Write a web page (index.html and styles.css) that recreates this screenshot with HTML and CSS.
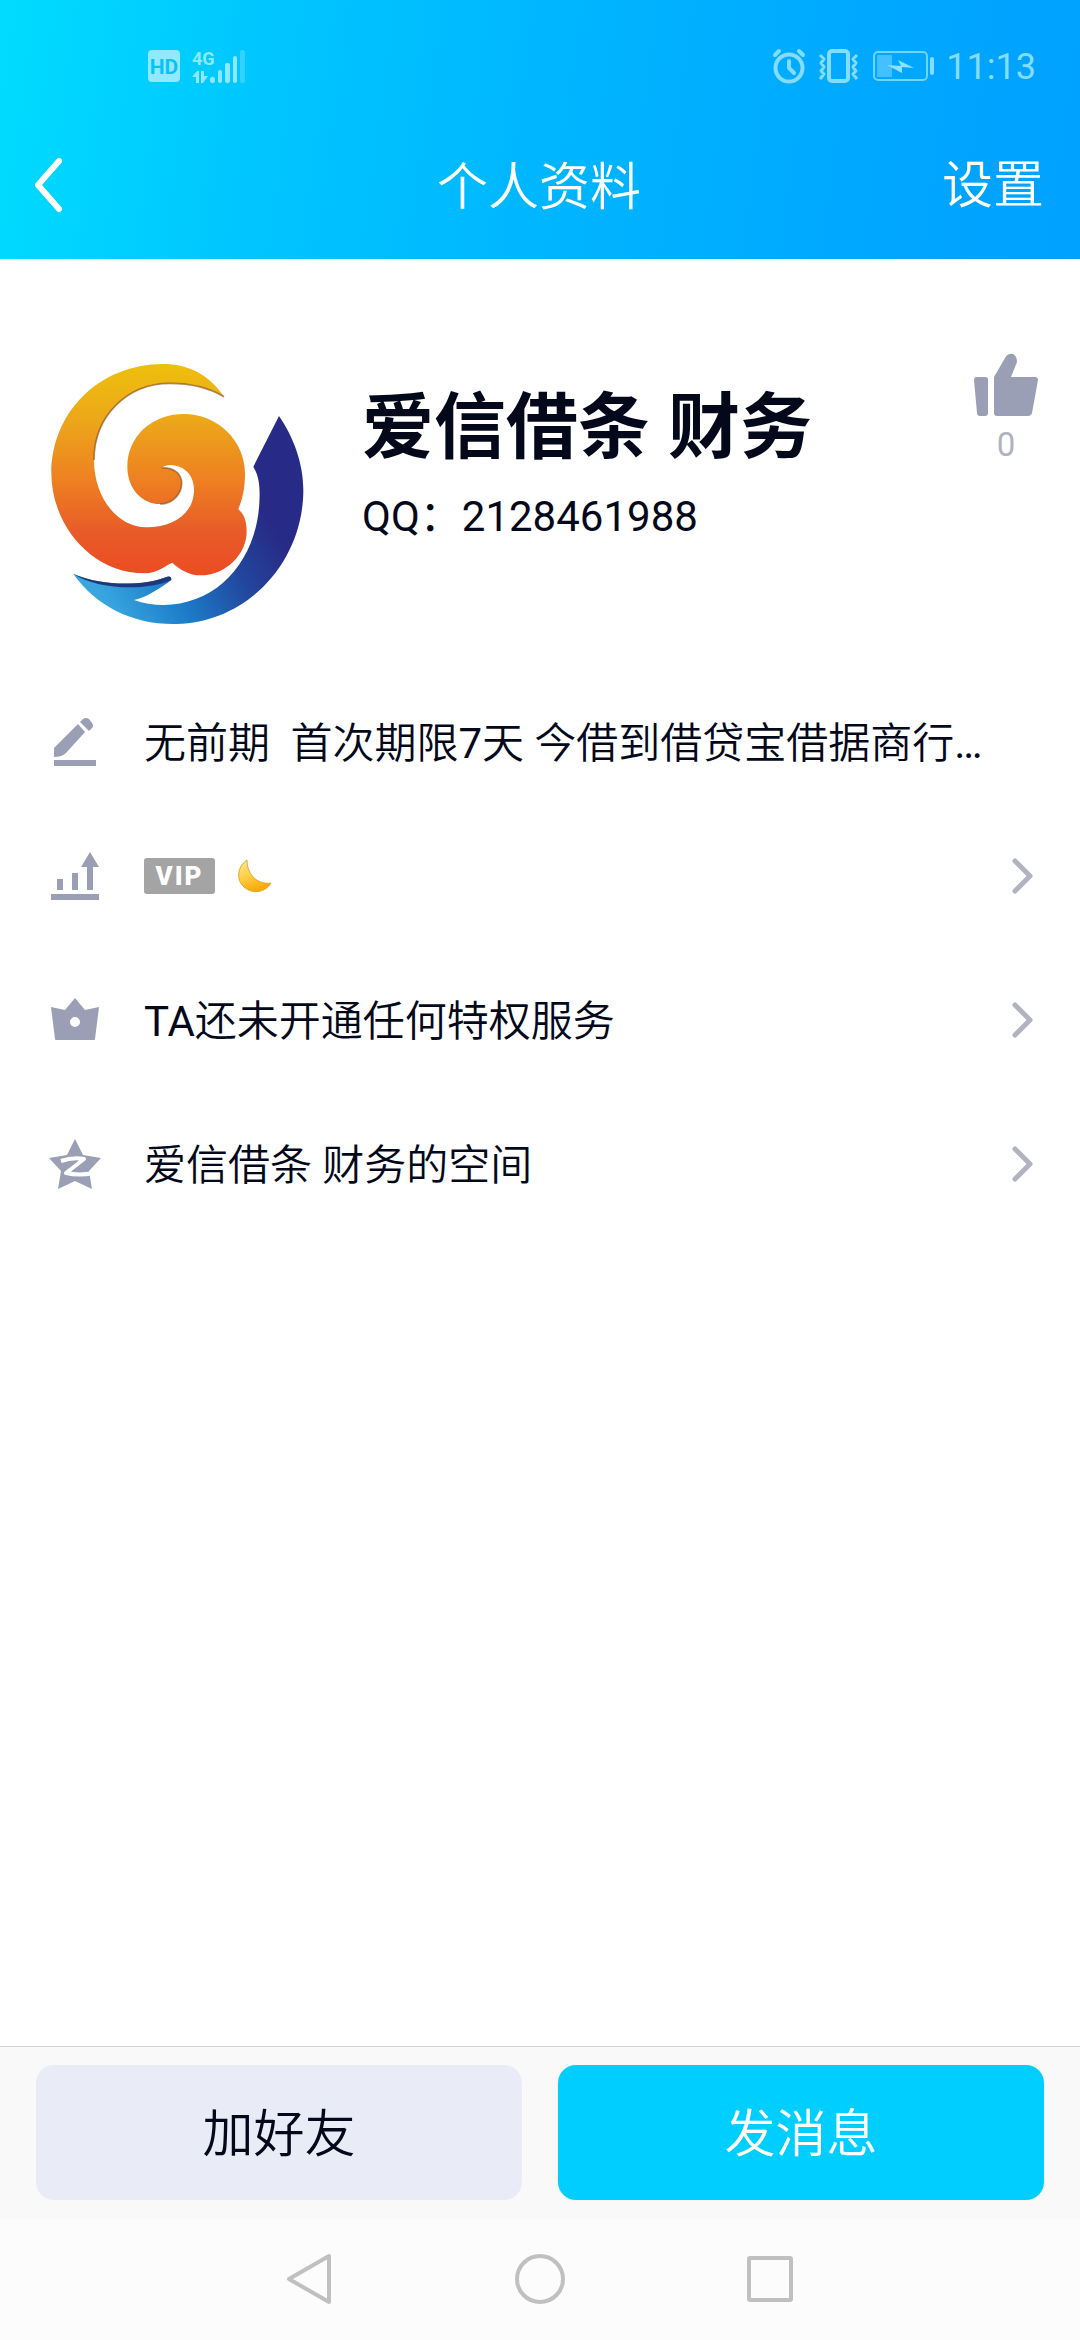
FILE: index.html
```html
<!DOCTYPE html>
<html lang="zh-CN">
<head>
    <meta charset="UTF-8">
    <meta name="viewport" content="width=device-width, initial-scale=1.0">
    <title>个人资料</title>
    <link rel="stylesheet" href="styles.css">
</head>
<body>
    <header class="header">
        <!-- Status bar -->
        <div class="status-bar">
            <div class="status-left">
                <svg width="32" height="32" viewBox="0 0 32 32">
                    <rect width="32" height="32" rx="4" fill="#93e8ff"/>
                    <text x="16" y="24" text-anchor="middle" class="hd-text">HD</text>
                </svg>
                <svg width="54" height="36" viewBox="0 0 54 36" fill="#8ce8ff">
                    <text x="0" y="17" class="net-text">4G</text>
                    <path d="M0 29 L5 23 H7 V35 H4 V29Z M9 23 H12 V28 H16 L11 35 H9Z"/>
                    <rect x="18" y="29" width="5" height="6" rx="2"/>
                    <rect x="26" y="22" width="4" height="13" rx="2"/>
                    <rect x="33" y="15" width="5" height="20" rx="2"/>
                    <rect x="41" y="8" width="4" height="27" rx="2"/>
                    <rect x="48" y="2" width="5" height="33" rx="2" opacity=".35"/>
                </svg>
            </div>
            <div class="status-right">
                <svg width="34" height="36" viewBox="0 0 34 36" fill="none" stroke="#84dcff" stroke-width="4" stroke-linecap="round">
                    <circle cx="17" cy="20" r="13.5"/>
                    <path d="M17 13 V20 L22 25 M3 7 L7 3 M27 3 L31 7" stroke-linejoin="round"/>
                </svg>
                <svg width="42" height="36" viewBox="1 0 42 36" fill="none" stroke="#84dcff" stroke-width="4">
                    <rect x="12" y="3" width="19" height="30" rx="3"/>
                    <path d="M3 7 L7 11 L4 15 L7 19 L4 23 L7 26 L3 31 M40 7 L36 11 L39 15 L36 19 L39 23 L36 26 L40 31" stroke-width="3" stroke-linejoin="round"/>
                </svg>
                <svg width="62" height="36" viewBox="-2 0 62 36">
                    <rect x="0" y="4" width="53" height="28" rx="4" fill="none" stroke="#6fd4ff" stroke-width="2"/>
                    <rect x="3" y="7" width="15" height="22" rx="1" fill="#44bfff"/>
                    <path d="M13 17 L27 18 L24 12 L40 20 L28 19 V25Z" fill="#90e0ff"/>
                    <rect x="56" y="9" width="4" height="18" rx="2" fill="#84dcff"/>
                </svg>
                <time class="clock">11:13</time>
            </div>
        </div>

        <!-- Title bar -->
        <div class="title-bar">
            <button class="back-btn" aria-label="返回">
                <svg width="30" height="56" viewBox="0 0 30 56" fill="none" stroke="#fff" stroke-width="6" stroke-linecap="round" stroke-linejoin="round">
                    <path d="M25 3 L4 27 L25 51"/>
                </svg>
            </button>
            <h1 class="title">个人资料</h1>
            <button class="settings-btn">设置</button>
        </div>
    </header>

    <main class="content">
        <!-- Profile card -->
        <section class="profile">
            <svg class="avatar" viewBox="0 0 900 900">
                <defs>
                    <linearGradient id="flame" x1="0" y1="0" x2="0" y2="1">
                        <stop offset="0" stop-color="#eebf0c"/>
                        <stop offset=".25" stop-color="#eca91a"/>
                        <stop offset=".55" stop-color="#ee8022"/>
                        <stop offset=".8" stop-color="#e85a28"/>
                        <stop offset="1" stop-color="#ec4c22"/>
                    </linearGradient>
                    <linearGradient id="wave" gradientUnits="userSpaceOnUse" x1="240" y1="800" x2="700" y2="520">
                        <stop offset="0" stop-color="#38a5df"/>
                        <stop offset=".35" stop-color="#1c7bc8"/>
                        <stop offset=".7" stop-color="#22479e"/>
                        <stop offset="1" stop-color="#272b87"/>
                    </linearGradient>
                </defs>
                <path fill="url(#flame)" d="M582 170 C535 100 470 72 400 72 C205 72 64 220 64 400 C64 550 180 700 345 700 C385 698 400 680 427 668 C450 690 480 706 510 706 C590 706 650 640 650 575 C650 540 640 520 625 508 C640 470 645 440 645 400 C645 300 560 222 462 222 C365 222 292 290 292 380 C292 450 340 492 390 492 C430 492 455 460 455 430 C455 400 430 382 395 384 C405 375 420 374 430 376 C470 382 492 410 492 450 C492 520 430 562 350 562 C260 562 192 470 192 360 C192 230 290 130 420 130 C490 130 540 145 582 170Z"/>
                <path fill="none" stroke="#8a4a16" stroke-width="5" opacity=".65" d="M582 170 C540 145 490 130 420 130 C290 130 192 230 192 360 M390 492 C430 492 455 460 455 430 C455 400 430 382 395 384"/>
                <path fill="url(#wave)" d="M747 228 L670 380 C690 415 690 450 688 490 C678 665 560 795 400 795 C370 795 340 790 312 780 C350 772 390 745 424 720 Q424 708 412 710 C340 738 220 740 130 702 C200 800 310 855 440 852 C660 845 820 660 820 450 C820 370 790 290 747 228Z"/>
                <path fill="#20377c" d="M130 702 C220 740 340 738 412 710 Q424 708 424 720 C350 752 210 752 130 702Z"/>
            </svg>
            <div class="profile-info">
                <h2 class="nickname">爱信借条 财务</h2>
                <p class="account">QQ：2128461988</p>
            </div>
            <button class="like-btn" aria-label="赞">
                <svg width="64" height="64" viewBox="0 0 64 64" fill="#9a9fb6">
                    <path d="M3 24 H11 Q14 24 14 27 V60 Q14 63 11 63 H6 Q3 63 3 60 L0 27 Q0 24 3 24Z"/>
                    <path d="M20 24 L31 5 Q34 0 39 1 Q43 3 43 9 L37 24 H61 Q64 24 64 27 L58 60 Q57 63 54 63 H23 Q20 63 20 60Z"/>
                </svg>
                <span>0</span>
            </button>
        </section>

        <!-- Info rows -->
        <ul class="info-list">
            <li>
                <a href="#" class="info-row signature">
                    <svg class="row-icon" viewBox="0 0 54 54" fill="#9a9fb6">
                        <path d="M6 42 V33 L30 9 L37 17 L18 38 Q14 42 6 42Z"/>
                        <path d="M32 7 L35 4 Q38 2 41 4 L44 8 Q46 11 44 13 L41 16Z"/>
                        <rect x="6" y="45" width="42" height="6"/>
                    </svg>
                    <span class="row-text">无前期&nbsp; 首次期限<span class="latin">7</span>天 今借到借贷宝借据商行<span class="latin">…</span></span>
                </a>
            </li>
            <li>
                <a href="#" class="info-row">
                    <svg class="row-icon" viewBox="0 0 54 54" fill="#9a9fb6">
                        <rect x="9" y="30" width="6" height="11"/>
                        <rect x="24" y="24" width="6" height="17"/>
                        <path d="M39 41 V18 H33 L42 3 L51 18 H45 V41Z"/>
                        <rect x="3" y="45" width="48" height="6"/>
                    </svg>
                    <span class="level">
                        <span class="vip">VIP</span>
                        <svg width="36" height="36" viewBox="0 0 36 36">
                            <defs>
                                <linearGradient id="moon" x1="0" y1="0" x2=".4" y2="1">
                                    <stop offset="0" stop-color="#ffe9a0"/>
                                    <stop offset=".5" stop-color="#ffd24a"/>
                                    <stop offset="1" stop-color="#f9a90c"/>
                                </linearGradient>
                            </defs>
                            <path d="M10 2 C0 9 -1 22 7 29 C16 37 29 34 34 25 C23 27 10 19 10 2Z" fill="url(#moon)" stroke="#e8a52c" stroke-width="1"/>
                        </svg>
                    </span>
                    <svg class="chevron" viewBox="0 0 22 36"><path d="M3 3 L18 18 L3 33"/></svg>
                </a>
            </li>
            <li>
                <a href="#" class="info-row">
                    <svg class="row-icon" viewBox="0 0 54 54" fill="#9a9fb6">
                        <path fill-rule="evenodd" d="M3 14 L17 17 L27 5 L37 17 L51 14 L47 46 Q47 47 46 47 H8 Q7 47 7 46Z M27 24 A5 5 0 1 0 27 34 A5 5 0 1 0 27 24Z"/>
                    </svg>
                    <span class="row-text"><span class="latin">TA</span>还未开通任何特权服务</span>
                    <svg class="chevron" viewBox="0 0 22 36"><path d="M3 3 L18 18 L3 33"/></svg>
                </a>
            </li>
            <li>
                <a href="#" class="info-row">
                    <svg class="row-icon" viewBox="0 0 54 54">
                        <path fill="#9a9fb6" d="M27 2 L35 18 L53 21 L41 34 L44 52 L27 44 L10 52 L13 34 L1 21 L19 18Z"/>
                        <path fill="none" stroke="#fff" stroke-width="4" stroke-linejoin="round" d="M13 24 Q25 20 36 22 L18 36 Q32 39 45 36"/>
                    </svg>
                    <span class="row-text">爱信借条 财务的空间</span>
                    <svg class="chevron" viewBox="0 0 22 36"><path d="M3 3 L18 18 L3 33"/></svg>
                </a>
            </li>
        </ul>
    </main>

    <!-- Bottom actions -->
    <footer class="actions">
        <button class="action-btn">加好友</button>
        <button class="action-btn primary">发消息</button>
    </footer>

    <!-- System navigation -->
    <nav class="system-nav">
        <button aria-label="Back">
            <svg width="52" height="52" viewBox="0 0 52 52"><path d="M45 3 V49 L5 26Z"/></svg>
        </button>
        <button aria-label="Home">
            <svg width="52" height="52" viewBox="0 0 52 52"><circle cx="26" cy="26" r="23"/></svg>
        </button>
        <button aria-label="Recent apps">
            <svg width="52" height="52" viewBox="0 0 52 52"><rect x="5" y="5" width="42" height="42" rx="1"/></svg>
        </button>
    </nav>
</body>
</html>
```
FILE: styles.css
```css
* {
    box-sizing: border-box;
}

body {
    margin: 0;
    min-height: 100vh;
    display: flex;
    flex-direction: column;
    font-family: Roboto, "Noto Sans CJK SC", sans-serif;
    font-weight: 350;
    color: #03081a;
    background: #fff;
}

svg {
    display: block;
    flex-shrink: 0;
}

button {
    margin: 0;
    padding: 0;
    border: none;
    background: none;
    font-family: inherit;
    font-weight: inherit;
    color: inherit;
    cursor: pointer;
}

/* Header */
.header {
    background: linear-gradient(98deg, #00dcff 0%, #00c6ff 24%, #00b4ff 54%, #00a5ff 86%, #00a2ff 100%);
    color: #fff;
}

.status-bar {
    display: flex;
    justify-content: space-between;
    align-items: center;
    height: 132px;
    padding: 0 44px 0 148px;
}

.status-left,
.status-right {
    display: flex;
    align-items: center;
    gap: 12px;
}

.hd-text {
    font-family: Roboto, sans-serif;
    font-size: 21px;
    font-weight: 700;
    fill: #06c4fb;
}

.net-text {
    font-family: Roboto, sans-serif;
    font-size: 18px;
    font-weight: 700;
}

.clock {
    padding-top: 2px;
    font-size: 36px;
    line-height: 36px;
    font-weight: 400;
    color: #84dcff;
}

.title-bar {
    display: grid;
    grid-template-columns: 1fr auto 1fr;
    align-items: center;
    height: 127px;
    padding: 0 36px 20px 34px;
}

.back-btn {
    justify-self: start;
}

.title {
    margin: 0;
    padding-top: 4px;
    font-size: 51px;
    line-height: 60px;
    font-weight: 350;
}

.settings-btn {
    justify-self: end;
    font-size: 51px;
    line-height: 60px;
}

/* Profile card */
.content {
    flex: 1;
}

.profile {
    display: flex;
    align-items: flex-start;
    padding: 81px 36px 40px 30px;
}

.avatar {
    width: 300px;
    height: 300px;
}

.profile-info {
    flex: 1;
    padding: 46px 0 0 32px;
}

.nickname {
    margin: 0;
    font-size: 72px;
    line-height: 84px;
    font-weight: 700;
}

.account {
    margin: 22px 0 0;
    font-size: 42px;
    line-height: 50px;
    font-weight: 400;
}

.like-btn {
    display: flex;
    flex-direction: column;
    align-items: center;
    gap: 10px;
    width: 76px;
    padding-top: 13px;
    font-size: 33px;
    line-height: 36px;
    font-weight: 400;
    color: #b0b3bf;
}

/* Info rows */
.info-list {
    margin: 0;
    padding: 0;
    list-style: none;
}

.info-row {
    display: flex;
    align-items: center;
    height: 144px;
    padding: 0 46px 0 48px;
    color: inherit;
    text-decoration: none;
}

.info-row.signature {
    height: 124px;
}

.row-icon {
    width: 54px;
    height: 54px;
    margin-right: 42px;
}

.row-text {
    flex: 1;
    padding-top: 4px;
    font-size: 42px;
    line-height: 50px;
    white-space: nowrap;
}

.latin {
    font-weight: 400;
}

.level {
    flex: 1;
    display: flex;
    align-items: center;
    gap: 22px;
}

.vip {
    width: 71px;
    border-radius: 3px;
    background: #a4a4a4;
    color: #fff;
    font-size: 26px;
    line-height: 36px;
    font-weight: 900;
    text-align: center;
    letter-spacing: 2px;
}

.chevron {
    width: 22px;
    height: 36px;
    fill: none;
    stroke: #b1b4bf;
    stroke-width: 5;
    stroke-linecap: round;
    stroke-linejoin: round;
}

/* Bottom actions */
.actions {
    display: flex;
    gap: 36px;
    padding: 18px 36px;
    border-top: 1px solid #d2d2d3;
    background: #f9f9fa;
}

.action-btn {
    flex: 1;
    height: 135px;
    padding-bottom: 6px;
    border-radius: 18px;
    background: #e9ecf6;
    font-size: 51px;
}

.action-btn.primary {
    background: #00ceff;
    color: #fff;
}

/* System navigation */
.system-nav {
    display: flex;
    justify-content: center;
    align-items: center;
    gap: 178px;
    height: 122px;
    background: #fcfcfc;
}

.system-nav svg {
    fill: none;
    stroke: #c0c0c0;
    stroke-width: 4;
    stroke-linejoin: round;
}
```
